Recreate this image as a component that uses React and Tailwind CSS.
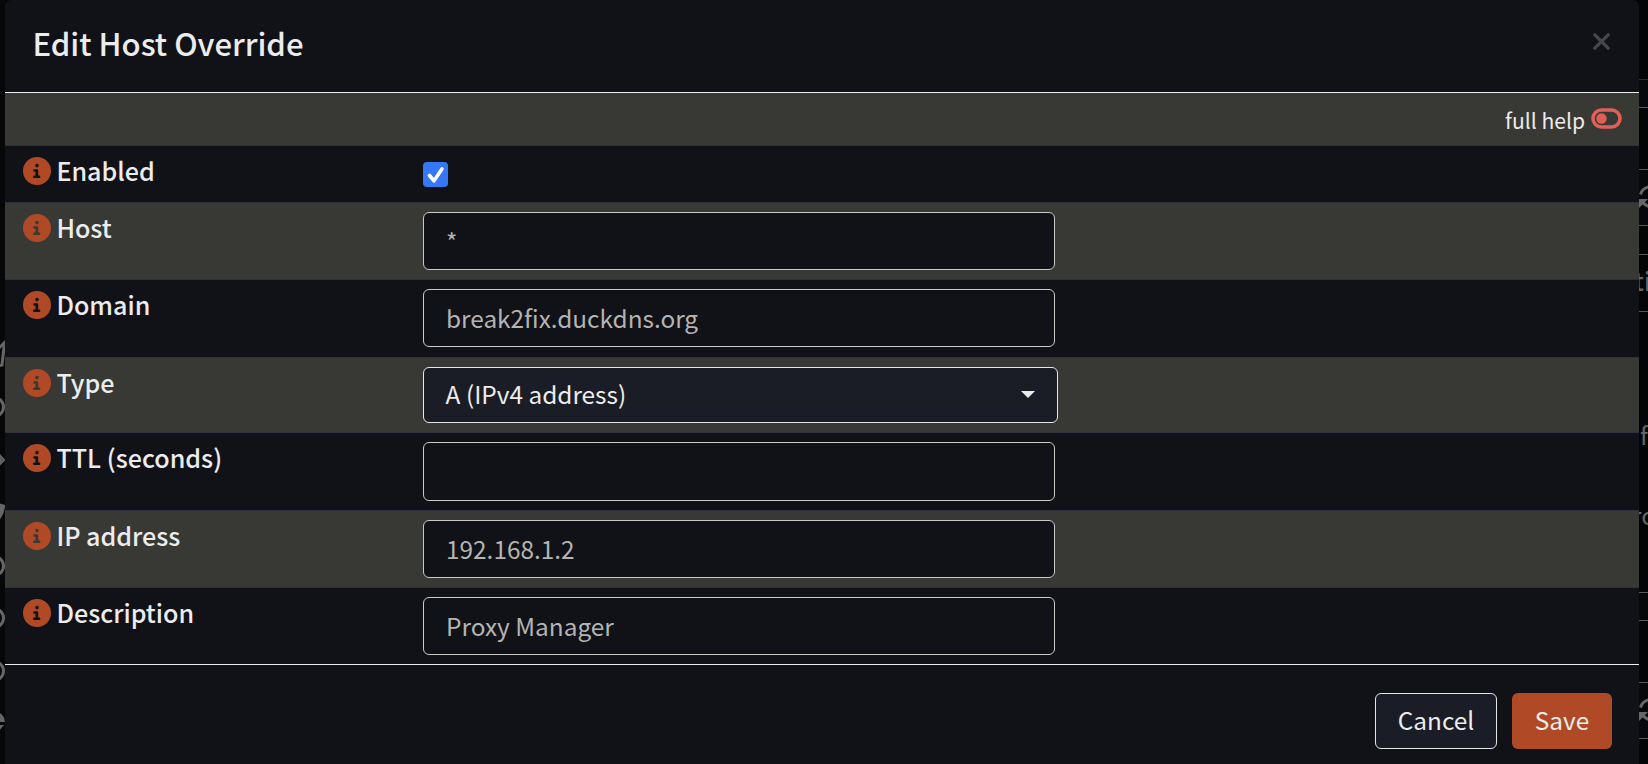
const F = `"Noto Sans CJK SC", sans-serif`;

function Info() {
  return (
    <svg className="mt-[11px] size-[28px] shrink-0" viewBox="0 0 512 512" fill="#b04a26" aria-hidden="true">
      <path d="M256 512A256 256 0 1 0 256 0a256 256 0 1 0 0 512zM208 336h20V268H212c-14 0-24-10-24-23s10-23 24-23h42c14 0 24 10 24 24v90h16c14 0 24 10 24 23s-10 23-24 23H208c-14 0-24-10-24-23s10-23 24-23zm48-212a33 33 0 1 1 0 66 33 33 0 1 1 0-66z" />
    </svg>
  );
}

function Row({ label, className, children }) {
  return (
    <div className={`flex items-start border-b border-[#2f303c] pl-[18px] ${className}`}>
      <div className="flex w-[400px] shrink-0 items-start">
        <Info />
        <span className="ml-[5.400px] mt-[6px] text-[25.1px] leading-[37px] font-medium text-[#ececec]">{label}</span>
      </div>
      {children}
    </div>
  );
}

function Field({ value, className = "h-[58px]" }) {
  return (
    <input
      readOnly
      aria-label="value"
      value={value}
      className={`mt-[9px] w-[632px] rounded-[6px] border border-[#c9c9c6] bg-[#111217] px-[22px] pb-[1px] text-[24.4px] text-[#b4b4b2] outline-none ${className}`}
    />
  );
}

function Refresh() {
  return (
    <svg className="block size-[24px]" viewBox="0 0 24 24" fill="none" stroke="#666" strokeWidth="3" aria-hidden="true">
      <path d="M1.500 9.500A11 11 0 0 1 20 5M3 16Q6 21 12 22" />
      <path d="M0 14h9l-3 3L0 23z" fill="#666" stroke="none" />
    </svg>
  );
}

const side = "border-b border-[#58595b]";

export default function App() {
  return (
    <div className="relative flex h-[764px] w-[1648px] overflow-hidden bg-[#040507]" style={{ fontFamily: F }}>
      <div className="relative w-[5px] shrink-0 overflow-hidden bg-[#060709]">
        <svg className="absolute left-0 top-0" width="5" height="764" fill="none" stroke="#666" strokeWidth="3" aria-hidden="true">
          <path d="M-2 349L4.500 342.500L2 365L-2 366" />
          <circle cx="-6" cy="407" r="9.500" />
          <path d="M-5 450L4 460L-5 469" strokeWidth="2" />
          <path d="M-2 456.500Q4 460-2 463.500" strokeWidth="2" />
          <path d="M-5 502L5 505Q5 514-2 522z" fill="#666" stroke="none" />
          <circle cx="-6" cy="566" r="9.500" />
          <circle cx="-6" cy="618" r="9.500" />
          <circle cx="-6" cy="671" r="9.500" />
          <path d="M-5 711Q4 713 5 722H-5zM-5 725H4L-2 732z" fill="#666" stroke="none" />
        </svg>
      </div>
      <div className="flex w-[1634px] shrink-0 flex-col rounded-t-[6px] bg-[#111217]">
        <header className="flex h-[93px] items-start justify-between border-b border-[#ececec] pl-[27.400px] pr-[29px]">
          <h1 className="mt-[20px] text-[31.1px] leading-[46px] font-medium text-[#ececec]">Edit Host Override</h1>
          <svg className="mt-[33px]" width="17" height="17" viewBox="0 0 17 17" stroke="#46474b" strokeWidth="3.200" strokeLinecap="round" aria-hidden="true">
            <path d="M1.800 1.800L15.200 15.200M15.200 1.800L1.800 15.200" />
          </svg>
        </header>
        <div className="flex h-[53px] items-start justify-end border-b border-[#2f303c] bg-[#383835] pr-[17.500px]">
          <span className="mt-[11px] text-[21.1px] leading-[32px] text-[#ececec]">full help</span>
          <svg className="ml-[5.500px] mt-[15px]" width="31" height="21" viewBox="0 0 31 21" aria-hidden="true">
            <rect x="2" y="2" width="27" height="17" rx="8.500" fill="none" stroke="#e15f58" strokeWidth="3.600" />
            <circle cx="10.500" cy="10.500" r="5.200" fill="#e15f58" />
          </svg>
        </div>
        <Row label="Enabled" className="h-[57px]">
          <span className="mt-[16px] flex size-[25px] items-center justify-center rounded-[4px] bg-[#3478f6]">
            <svg width="19" height="19" viewBox="0 0 19 19" fill="none" stroke="#fff" strokeWidth="3.600" strokeLinecap="round" strokeLinejoin="round" aria-hidden="true">
              <path d="M3.500 10.500L8 15.800L16 4" />
            </svg>
          </span>
        </Row>
        <Row label="Host" className="h-[77px] bg-[#383835]"><Field value="*" /></Row>
        <Row label="Domain" className="h-[78px]"><Field value="break2fix.duckdns.org" /></Row>
        <Row label="Type" className="h-[75px] bg-[#383835]">
          <button className="mt-[9px] flex h-[56px] w-[635px] items-center justify-between rounded-[6px] border border-[#e6e6e6] bg-[#1b1d26] pl-[21.600px] pr-[22px] text-[24.4px] text-[#ececec]">
            <span className="pb-[2px]">A (IPv4 address)</span>
            <svg className="mb-[1px]" width="14" height="7" viewBox="0 0 14 7" fill="#ececec" aria-hidden="true"><path d="M0 0H14L7 7z" /></svg>
          </button>
        </Row>
        <Row label="TTL (seconds)" className="h-[78px]"><Field value="" className="h-[59px]" /></Row>
        <Row label="IP address" className="h-[77px] bg-[#383835]"><Field value="192.168.1.2" /></Row>
        <Row label="Description" className="h-[76px] border-b-0"><Field value="Proxy Manager" /></Row>
        <footer className="flex flex-1 items-start justify-end gap-[15px] border-t border-[#ececec] pr-[27px] pt-[28px] text-[24.4px] text-[#ececec]">
          <button className="h-[56px] w-[122px] rounded-[6px] border border-[#e6e6e6] bg-[#1b1d26] pb-[2px]">Cancel</button>
          <button className="h-[56px] w-[100px] rounded-[6px] bg-[#b04a26] pb-[2px]">Save</button>
        </footer>
      </div>
      <div className="flex w-[9px] shrink-0 flex-col overflow-hidden text-[#666]">
        <div className="h-[80px] shrink-0 border-b border-[#2c2d2f]" />
        <div className={`h-[28px] shrink-0 bg-[#07080c] ${side}`} />
        <div className={`h-[62px] shrink-0 ${side}`} />
        <div className={`h-[56px] shrink-0 bg-[#07080c] pt-[15px] ${side}`}><Refresh /></div>
        <div className={`h-[29px] shrink-0 ${side}`} />
        <div className={`h-[57px] shrink-0 text-[25px] leading-[50px] font-medium ${side}`}><span className="-ml-[5px]">ti</span></div>
        <div className={`h-[281px] shrink-0 pt-[105px] text-[24.4px] leading-[36px] ${side}`}>
          <div className="ml-[1px]">f</div>
          <div className="-ml-[7px] mt-[44px]">ro</div>
        </div>
        <div className={`h-[28px] shrink-0 bg-[#07080c] ${side}`} />
        <div className={`h-[62px] shrink-0 ${side}`} />
        <div className={`h-[56px] shrink-0 bg-[#07080c] pt-[15px] ${side}`}><Refresh /></div>
      </div>
    </div>
  );
}
